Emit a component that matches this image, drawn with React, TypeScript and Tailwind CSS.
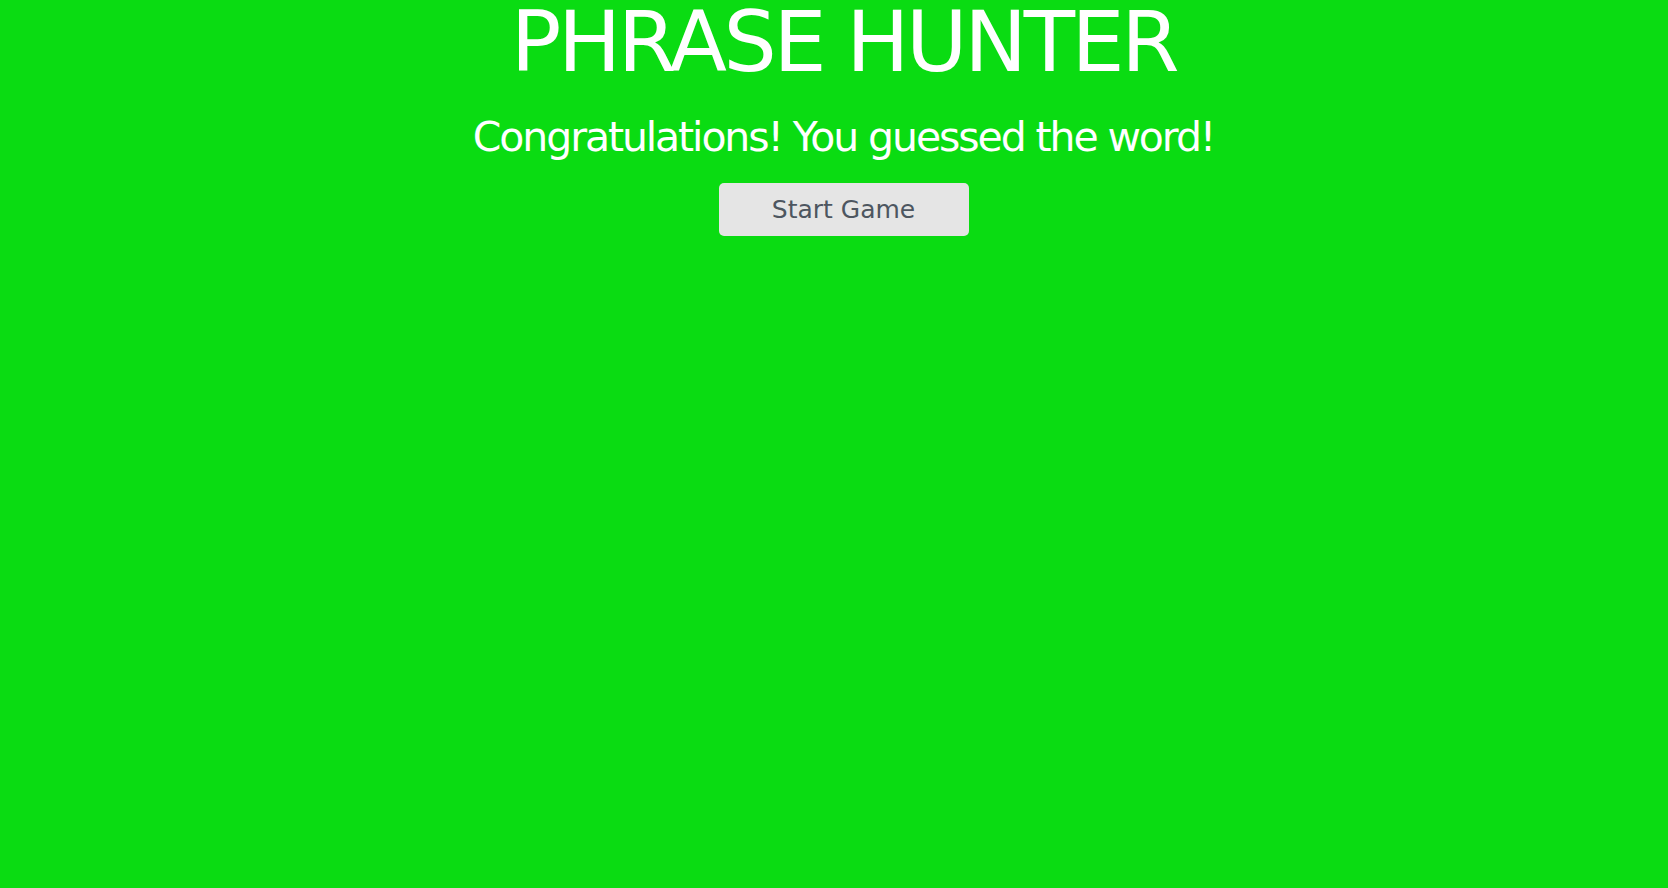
export default function App() {
  return (
    <div className="min-h-[888px] w-full bg-[#0adc12] flex flex-col items-center pl-[19px]" style={{ fontFamily: '"DejaVu Sans", sans-serif' }}>
      <h1 className="text-white text-[84px] leading-[84px] tracking-[-3.4px]">PHRASE HUNTER</h1>
      <h2 className="text-white text-[41px] leading-[50px] mt-[28px] tracking-[-2.1px]">Congratulations! You guessed the word!</h2>
      <button className="mt-[21px] w-[250px] h-[53px] rounded-[5px] bg-[#e5e5e5] text-[#4d5660] text-[25px]">Start Game</button>
    </div>
  );
}
